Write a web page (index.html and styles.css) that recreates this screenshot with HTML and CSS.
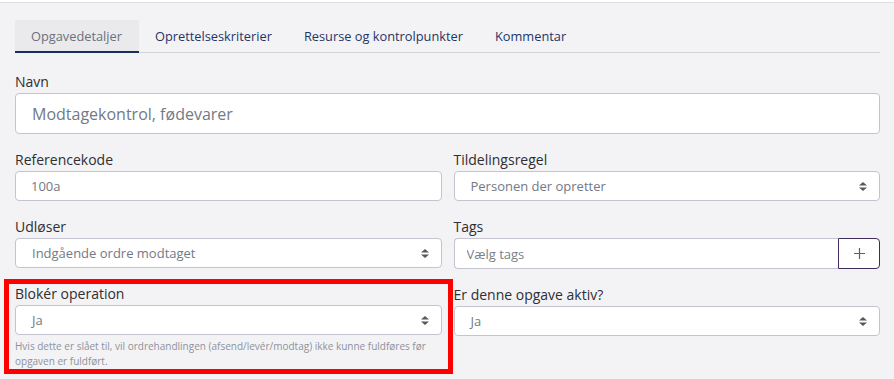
FILE: index.html
```html
<!DOCTYPE html>
<html lang="da">
<head>
    <meta charset="UTF-8">
    <meta name="viewport" content="width=device-width, initial-scale=1.0">
    <title>Opgavedetaljer</title>
    <link rel="stylesheet" href="styles.css">
</head>
<body>
    <div class="topbar"></div>
    <div class="page">
        <ul class="tabs">
            <li class="tab active">Opgavedetaljer</li>
            <li class="tab">Oprettelseskriterier</li>
            <li class="tab">Resurse og kontrolpunkter</li>
            <li class="tab">Kommentar</li>
        </ul>

        <form class="form">
            <div class="field">
                <label class="label">Navn</label>
                <input class="control large" type="text" value="Modtagekontrol, fødevarer">
            </div>

            <div class="row">
                <div class="field">
                    <label class="label">Referencekode</label>
                    <input class="control" type="text" value="100a">
                </div>
                <div class="field">
                    <label class="label">Tildelingsregel</label>
                    <div class="control select">
                        <span>Personen der opretter</span>
                        <svg class="caret" width="8" height="9" viewBox="0 0 8 9"><path d="M4 0L8 3.6H0Z M0 5.4H8L4 9Z"/></svg>
                    </div>
                </div>
            </div>

            <div class="row tight">
                <div class="field">
                    <label class="label">Udløser</label>
                    <div class="control select">
                        <span>Indgående ordre modtaget</span>
                        <svg class="caret" width="8" height="9" viewBox="0 0 8 9"><path d="M4 0L8 3.6H0Z M0 5.4H8L4 9Z"/></svg>
                    </div>
                </div>
                <div class="field">
                    <label class="label">Tags</label>
                    <div class="input-group">
                        <input class="control tags" type="text" placeholder="Vælg tags">
                        <button type="button" class="add-btn">
                            <svg width="11" height="11" viewBox="0 0 11 11"><path d="M5.5 0V11M0 5.5H11" stroke="#5a5f6b" stroke-width="1.2" fill="none"/></svg>
                        </button>
                    </div>
                </div>
            </div>

            <div class="row">
                <div class="field highlighted">
                    <label class="label">Blokér operation</label>
                    <div class="control select">
                        <span>Ja</span>
                        <svg class="caret" width="8" height="9" viewBox="0 0 8 9"><path d="M4 0L8 3.6H0Z M0 5.4H8L4 9Z"/></svg>
                    </div>
                    <p class="help">Hvis dette er slået til, vil ordrehandlingen (afsend/levér/modtag) ikke kunne fuldføres før opgaven er fuldført.</p>
                </div>
                <div class="field shifted">
                    <label class="label">Er denne opgave aktiv?</label>
                    <div class="control select">
                        <span>Ja</span>
                        <svg class="caret" width="8" height="9" viewBox="0 0 8 9"><path d="M4 0L8 3.6H0Z M0 5.4H8L4 9Z"/></svg>
                    </div>
                </div>
            </div>
        </form>
    </div>
</body>
</html>
```

FILE: styles.css
```css
* {
    box-sizing: border-box;
}
body {
    margin: 0;
    font-family: "Open Sans", sans-serif;
    background-color: #f3f3f5;
    color: #2e2e33;
}
.topbar {
    height: 3px;
    background-color: #fff;
    border-bottom: 1px solid #dedee2;
}
.page {
    padding: 17px 14px 0 15px;
}
.tabs {
    display: flex;
    list-style: none;
    margin: 0;
    padding: 0;
    border-bottom: 1px solid #d3d4da;
}
.tab {
    height: 32px;
    padding: 0 16px;
    display: flex;
    align-items: center;
    font-size: 12.8px;
    color: #1f3566;
    cursor: pointer;
}
.tab.active {
    height: 33px;
    margin-bottom: -1px;
    padding: 0 17px 0 16px;
    background-color: #eaeaed;
    color: #6b717d;
    border-bottom: 2px solid #1b2f5e;
}
.form {
    padding-top: 19px;
}
.row {
    display: grid;
    grid-template-columns: 1fr 1fr;
    column-gap: 12px;
}
.field {
    margin-bottom: 16px;
    position: relative;
}
.row.tight .field {
    margin-bottom: 15px;
}
.label {
    display: block;
    font-size: 14px;
    line-height: 20px;
    margin-bottom: 1px;
    color: #2e2e33;
}
.control {
    display: flex;
    align-items: center;
    width: 100%;
    height: 30px;
    padding: 0 12px 0 15px;
    font-family: "Open Sans", sans-serif;
    font-size: 13px;
    color: #737985;
    background-color: #fff;
    border: 1px solid #c3c4cf;
    border-radius: 4px;
    outline: none;
}
.control.large {
    height: 41px;
    padding-left: 16px;
    font-size: 16px;
}
.select {
    justify-content: space-between;
    padding-left: 16px;
}
.caret {
    fill: #55585f;
    flex-shrink: 0;
}
.input-group {
    display: flex;
    height: 31px;
}
.control.tags {
    height: 31px;
    padding-left: 12px;
    border-right: none;
    border-radius: 4px 0 0 4px;
}
.control.tags::placeholder {
    color: #7b808b;
}
.add-btn {
    flex: 0 0 42px;
    display: flex;
    align-items: center;
    justify-content: center;
    background-color: #fff;
    border: 1px solid #3d2c5c;
    border-radius: 0 4px 4px 0;
    padding: 0;
    cursor: pointer;
}
.help {
    margin: 4px 0 0;
    font-size: 10px;
    line-height: 15px;
    color: #8d929c;
}
.highlighted::after {
    content: "";
    position: absolute;
    top: -5px;
    bottom: -5px;
    left: -11px;
    right: -11px;
    border: 5px solid #ff0000;
    pointer-events: none;
}
.shifted {
    padding-top: 1px;
}
```
